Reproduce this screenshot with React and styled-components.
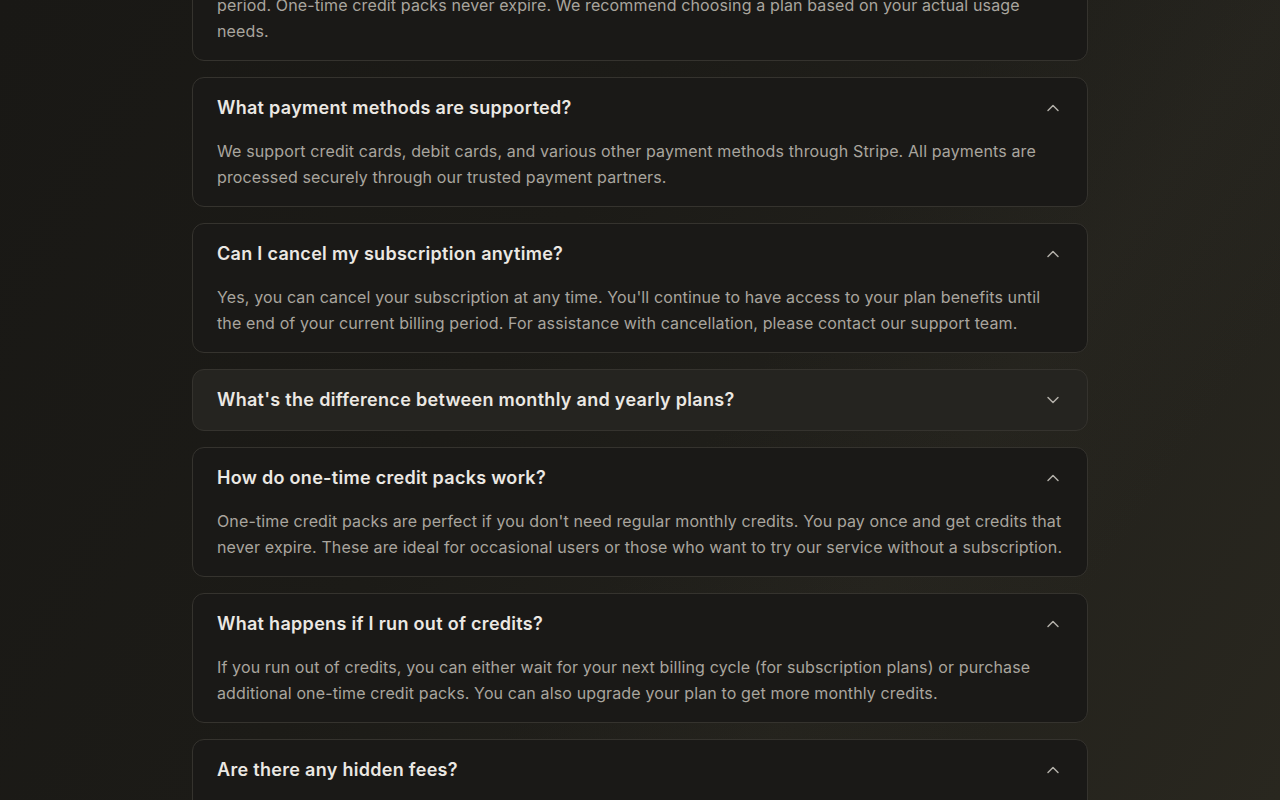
import React, { useState } from "react";
import styled, { createGlobalStyle } from "styled-components";
import { ChevronUp, ChevronDown } from "lucide-react";

const Global = createGlobalStyle`
  html, body { margin: 0; padding: 0; }
  body {
    background: #1b1a17;
    font-family: Inter, "Noto Sans", "Liberation Sans", sans-serif;
    -webkit-font-smoothing: antialiased;
  }
`;

const Page = styled.div`
  height: 800px;
  overflow: hidden;
  background:
    linear-gradient(125deg, rgba(0,0,0,0) 55%, rgba(60,56,44,0.12) 70%, rgba(0,0,0,0) 82%),
    linear-gradient(120deg, #191815 0%, #1c1b17 40%, #22211c 70%, #29271f 100%);
`;

const List = styled.div`
  max-width: 896px;
  margin: -95px auto 0;
  display: flex;
  flex-direction: column;
  gap: 16px;
`;

const Card = styled.div`
  border: 1px solid #35332e;
  border-radius: 12px;
  background: ${(p) => (p.$open ? "#1a1917" : "#252420")};
  overflow: hidden;
`;

const Header = styled.button`
  all: unset;
  box-sizing: border-box;
  width: 100%;
  display: flex;
  align-items: center;
  justify-content: space-between;
  padding: 16px 24px;
  cursor: pointer;
`;

const Question = styled.span`
  font-size: 18px;
  line-height: 28px;
  font-weight: 600;
  letter-spacing: 0.3px;
  color: #ebe8e3;
`;

const Icon = styled.span`
  display: flex;
  color: #b3b0a9;
`;

const Answer = styled.p`
  margin: 0;
  padding: 0 24px 16px;
  font-size: 16px;
  line-height: 26px;
  letter-spacing: 0.13px;
  color: #a9a59e;
`;

const faqs = [
  {
    q: "How does the credit system work?",
    a: "Each generation uses credits from your balance. Subscription credits refresh at the start of each billing period. One-time credit packs never expire. We recommend choosing a plan based on your actual usage needs.",
    open: true,
  },
  {
    q: "What payment methods are supported?",
    a: "We support credit cards, debit cards, and various other payment methods through Stripe. All payments are processed securely through our trusted payment partners.",
    open: true,
  },
  {
    q: "Can I cancel my subscription anytime?",
    a: "Yes, you can cancel your subscription at any time. You'll continue to have access to your plan benefits until the end of your current billing period. For assistance with cancellation, please contact our support team.",
    open: true,
  },
  {
    q: "What's the difference between monthly and yearly plans?",
    a: "Yearly plans give you the same monthly credits at a discounted price compared to paying month by month.",
    open: false,
  },
  {
    q: "How do one-time credit packs work?",
    a: "One-time credit packs are perfect if you don't need regular monthly credits. You pay once and get credits that never expire. These are ideal for occasional users or those who want to try our service without a subscription.",
    open: true,
  },
  {
    q: "What happens if I run out of credits?",
    a: "If you run out of credits, you can either wait for your next billing cycle (for subscription plans) or purchase additional one-time credit packs. You can also upgrade your plan to get more monthly credits.",
    open: true,
  },
  {
    q: "Are there any hidden fees?",
    a: "No, there are no hidden fees. The price you see is the price you pay, and all taxes are shown at checkout.",
    open: true,
  },
];

function Item({ item }) {
  const [open, setOpen] = useState(item.open);
  return (
    <Card $open={open}>
      <Header onClick={() => setOpen(!open)}>
        <Question>{item.q}</Question>
        <Icon>{open ? <ChevronUp size={20} strokeWidth={1.75} /> : <ChevronDown size={20} strokeWidth={1.75} />}</Icon>
      </Header>
      {open && <Answer>{item.a}</Answer>}
    </Card>
  );
}

export default function App() {
  return (
    <>
      <Global />
      <Page>
        <List>
          {faqs.map((f) => (
            <Item key={f.q} item={f} />
          ))}
        </List>
      </Page>
    </>
  );
}
